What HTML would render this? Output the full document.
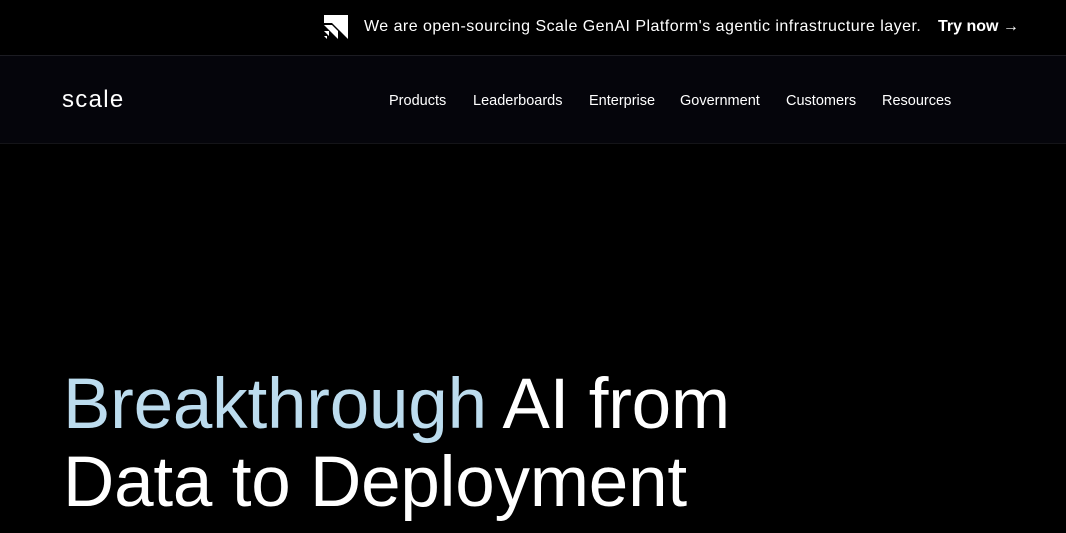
<!DOCTYPE html>
<html><head><style>
*{margin:0;padding:0;box-sizing:border-box}
body{width:1066px;height:533px;overflow:hidden;background:#000;font-family:"Liberation Sans",sans-serif;color:#fff}
.banner{height:56px;border-bottom:1px solid #1c1c22;position:relative}
.banner svg{position:absolute;left:324px;top:15px}
.banner .t{position:absolute;left:364px;top:18px;font-size:16px;letter-spacing:0.47px}
.banner .b{position:absolute;left:938px;top:18px;font-size:16px;font-weight:bold}
.nav{height:88px;background:#05050b;position:relative;border-bottom:1px solid #141418}
.nav a{position:absolute;top:37px;font-size:14.5px;color:#fff;text-decoration:none}
h1{position:absolute;left:63px;top:366px;font-size:71px;font-weight:normal;line-height:78px;letter-spacing:-0.2px}
h1 span{color:#bcdcee}
</style></head><body>
<div class="banner">
<svg width="24" height="24" viewBox="0 0 24 24"><path d="M0 0H24V24L8 8H0Z" fill="#fff"/><path d="M0 10H8L14 16V24ZM0 16H5V21ZM0 21H3V24Z" fill="#fff"/></svg>
<div class="t">We are open-sourcing Scale GenAI Platform's agentic infrastructure layer.</div>
<div class="b">Try now →</div>
</div>
<div class="nav">
<div style="position:absolute;left:62px;top:30px;font-size:24px;letter-spacing:1.3px">scale</div>
<a style="left:389px">Products</a>
<a style="left:473px">Leaderboards</a>
<a style="left:589px">Enterprise</a>
<a style="left:680px">Government</a>
<a style="left:786px">Customers</a>
<a style="left:882px">Resources</a>
</div>
<h1><span>Breakthrough</span> AI from<br>Data to Deployment</h1>
</body></html>
